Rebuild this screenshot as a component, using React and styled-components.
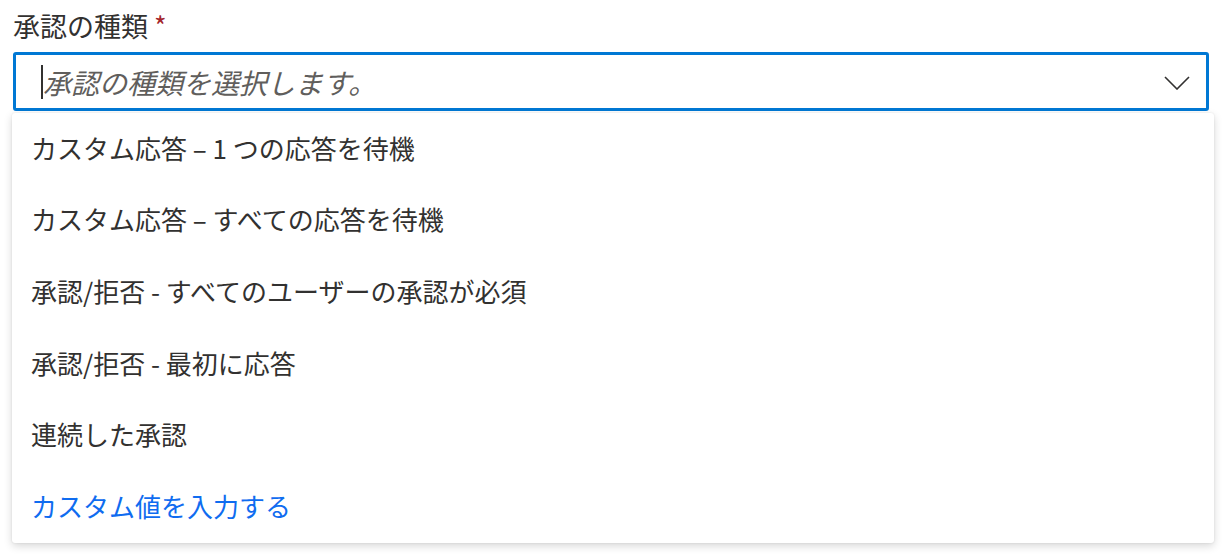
import React from "react";
import styled, { createGlobalStyle } from "styled-components";

const GlobalStyle = createGlobalStyle`
  body {
    margin: 0;
    background: #ffffff;
    font-family: "Noto Sans CJK JP", "Noto Sans", sans-serif;
  }
`;

const Page = styled.div`
  width: 1228px;
  height: 557px;
  padding: 7px 14px 0 12px;
  box-sizing: border-box;
  overflow: hidden;
`;

const Label = styled.div`
  font-size: 27px;
  line-height: 38px;
  color: #323130;
  padding-left: 1px;
  margin-bottom: 7px;
`;

const Required = styled.span`
  color: #a4262c;
  margin-left: 6px;
`;

const Input = styled.div`
  display: flex;
  align-items: center;
  height: 59px;
  margin-left: 1px;
  margin-right: 5px;
  border: 3px solid #0078d4;
  border-radius: 3px;
  box-sizing: border-box;
  padding: 0 16px 0 25px;
`;

const Caret = styled.span`
  width: 2px;
  height: 34px;
  background: #323130;
  margin-right: 0;
`;

const Placeholder = styled.span`
  flex: 1;
  font-size: 28px;
  font-style: italic;
  color: #605e5c;
`;

const Chevron = styled.svg`
  width: 26px;
  height: 14px;
  margin-top: 2px;
`;

const Menu = styled.div`
  margin-top: 2px;
  background: #ffffff;
  border-radius: 3px;
  box-shadow: 0 3px 8px rgba(0, 0, 0, 0.16), 0 0 2px rgba(0, 0, 0, 0.1);
`;

const Option = styled.div`
  height: 71.6px;
  display: flex;
  align-items: center;
  padding-left: 19px;
  padding-bottom: 3px;
  box-sizing: border-box;
  font-size: 26px;
  color: ${(props) => (props.link ? "#0f6cf0" : "#323130")};
`;

const options = [
  "カスタム応答 – 1 つの応答を待機",
  "カスタム応答 – すべての応答を待機",
  "承認/拒否 - すべてのユーザーの承認が必須",
  "承認/拒否 - 最初に応答",
  "連続した承認",
];

const App = () => {
  return (
    <Page>
      <GlobalStyle />
      <Label>
        承認の種類<Required>*</Required>
      </Label>
      <Input>
        <Caret />
        <Placeholder>承認の種類を選択します。</Placeholder>
        <Chevron viewBox="0 0 26 14">
          <path d="M1 1 L13 13 L25 1" fill="none" stroke="#323130" strokeWidth="1.6" />
        </Chevron>
      </Input>
      <Menu>
        {options.map((o) => (
          <Option key={o}>{o}</Option>
        ))}
        <Option link={1}>カスタム値を入力する</Option>
      </Menu>
    </Page>
  );
};

export default App;
